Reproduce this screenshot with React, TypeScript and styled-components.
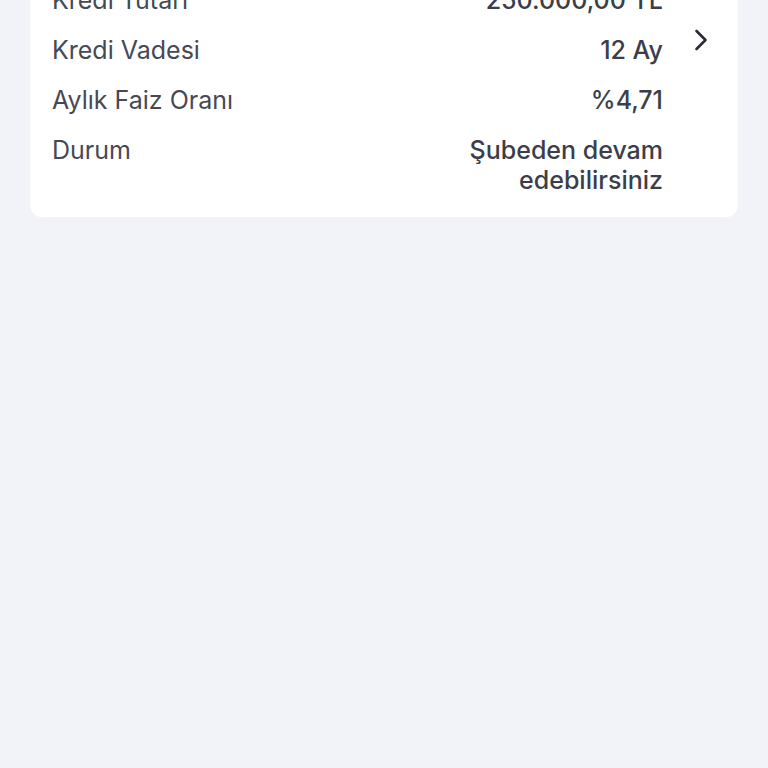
import styled, { createGlobalStyle } from 'styled-components'

const GlobalStyle = createGlobalStyle`
  html, body {
    margin: 0;
    padding: 0;
    background: #f2f3f8;
    font-family: Inter, 'Noto Sans', sans-serif;
    overflow: hidden;
  }
`

const Page = styled.div`
  width: 768px;
  height: 768px;
  padding: 0 30px;
  box-sizing: border-box;
`

const Card = styled.div`
  margin-top: -53px;
  background: #ffffff;
  border-radius: 12px;
  padding: 38px 0 22px 22px;
  display: flex;
  align-items: flex-start;
`

const Rows = styled.div`
  flex: 1;
  display: flex;
  flex-direction: column;
`

const Row = styled.div<{ $tall?: boolean }>`
  display: flex;
  justify-content: space-between;
  align-items: flex-start;
  height: ${(p) => (p.$tall ? '60px' : '50px')};
`

const Label = styled.span`
  font-size: 25px;
  line-height: 30px;
  color: #464955;
  font-weight: 400;
`

const Value = styled.span`
  font-size: 25px;
  line-height: 30px;
  color: #3b3e4a;
  font-weight: 500;
  text-align: right;
  max-width: 230px;
`

const Chevron = styled.div`
  width: 75px;
  display: flex;
  justify-content: center;
  padding-top: 44px;
`

const rows = [
  { label: 'Kredi Tutarı', value: '250.000,00 TL' },
  { label: 'Kredi Vadesi', value: '12 Ay' },
  { label: 'Aylık Faiz Oranı', value: '%4,71' },
  { label: 'Durum', value: 'Şubeden devam edebilirsiniz' }
]

function App() {
  return (
    <Page>
      <GlobalStyle />
      <Card>
        <Rows>
          {rows.map((r, i) => (
            <Row key={r.label} $tall={i === rows.length - 1}>
              <Label>{r.label}</Label>
              <Value>{r.value}</Value>
            </Row>
          ))}
        </Rows>
        <Chevron>
          <svg width='16' height='22' viewBox='0 0 16 22' fill='none'>
            <path d='M3.5 2 L12.5 11 L3.5 20' stroke='#2a2d37' strokeWidth='2.6' strokeLinecap='round' strokeLinejoin='round' />
          </svg>
        </Chevron>
      </Card>
    </Page>
  )
}

export default App
